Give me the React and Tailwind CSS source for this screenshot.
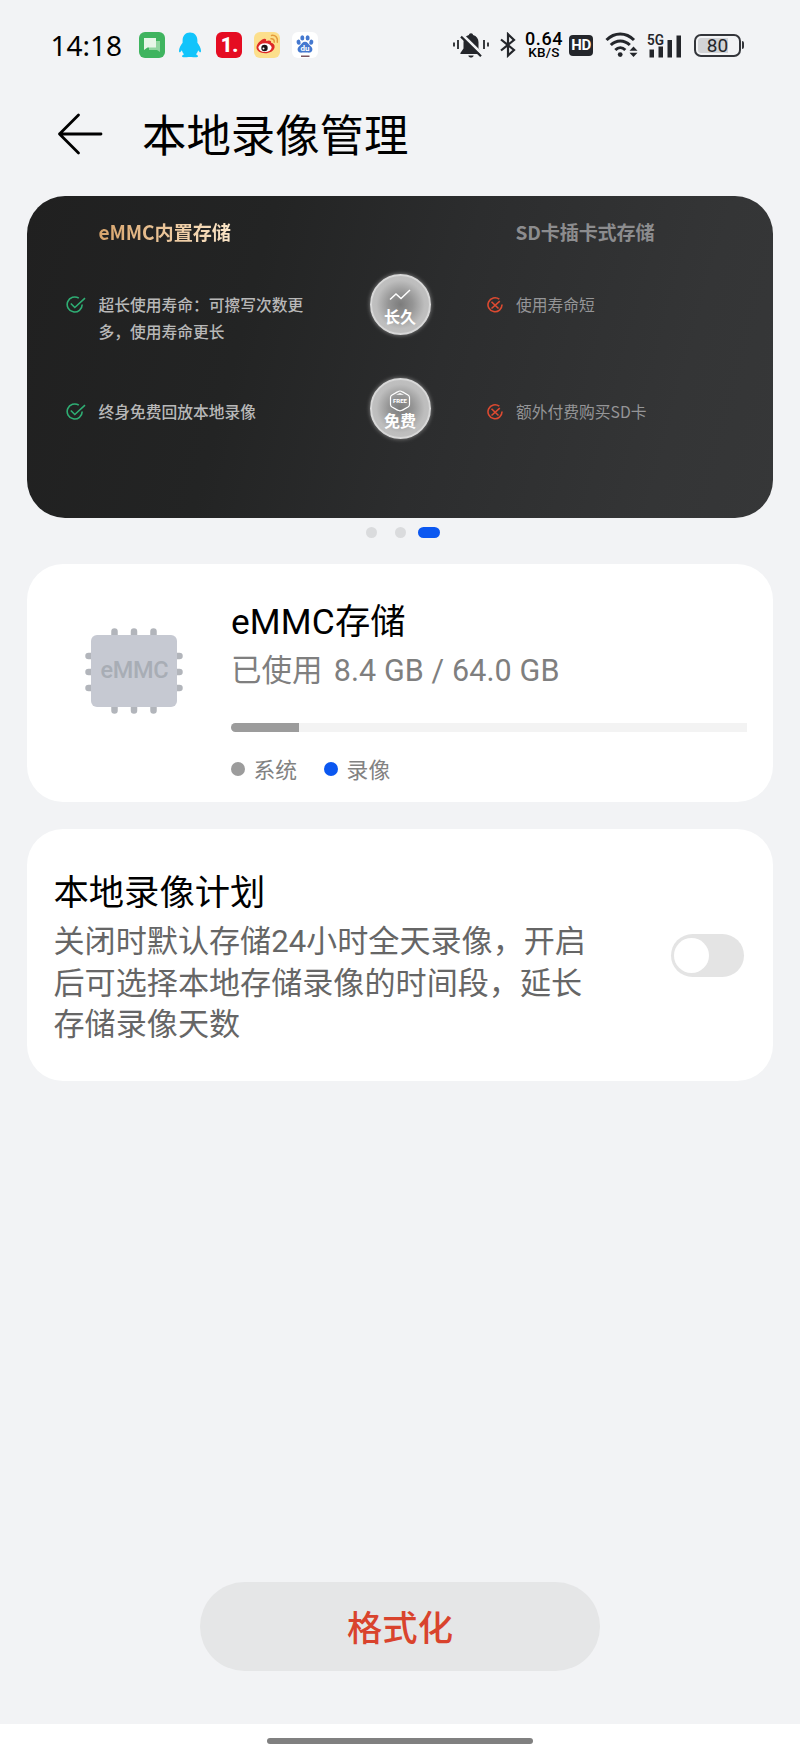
import { useState } from "react";

const GOOD_POINTS = ["超长使用寿命：可擦写次数更多，使用寿命更长", "终身免费回放本地录像"];
const BAD_POINTS = ["使用寿命短", "额外付费购买SD卡"];

const storage = { used: 8.4, total: 64.0 };

function ChatIcon() {
  return (
    <svg viewBox="0 0 26 26" className="h-[26px] w-[26px]">
      <rect width="26" height="26" rx="6" fill="#3fb45f" />
      <path d="M10 9h11v11l-3-2h-8z" fill="#8fd6a0" />
      <path d="M5 6h12v9.500h-8.500L5 18z" fill="#e6f6e8" />
    </svg>
  );
}

function PenguinIcon() {
  return (
    <svg viewBox="0 0 24 26" className="ml-[13px] h-[26px] w-6">
      <path
        d="M12 0.500c-4.600 0-7.400 3.300-7.400 8v2.300C3 13 1 16 1 18.800c0 1.700.8 2 1.600 1l1.300-1.500c.4 1.700 1.100 2.900 2.200 4-1.400.5-2.200 1.300-2 2.400.2.600 5.700.6 7.900.4 2.200.2 7.700.2 7.900-.4.2-1.100-.6-1.900-2-2.400 1.100-1.100 1.800-2.300 2.200-4l1.300 1.500c.8 1 1.600.7 1.600-1 0-2.800-2-5.800-3.600-8V8.500c0-4.700-2.800-8-7.400-8z"
        fill="#12c4fb"
      />
    </svg>
  );
}

function WeiboIcon() {
  return (
    <svg viewBox="0 0 26 26" className="ml-[12px] h-[26px] w-[26px]">
      <rect width="26" height="26" rx="6" fill="#fcdf8c" />
      <path d="M9.500 7c2-.8 3.100.2 2.600 1.900 2.800-1 5.600-.6 5 1.800 2 .5 3.900 1.900 3.500 4.500-.5 3.700-5 6-9.500 6S2.500 19 2.500 15.500C2.500 12.300 6 8.300 9.500 7z" fill="#dd2827" />
      <ellipse cx="11" cy="15.600" rx="6.600" ry="4.400" fill="#fff" />
      <circle cx="10.500" cy="16" r="3.200" fill="#1c1414" />
      <circle cx="9.500" cy="16.600" r="1" fill="#fff" />
      <path d="M17 6.800c2.200-.2 3.600 1.300 3.200 3.400M17.500 3.400c4.200-.5 6.700 2.600 5.800 6.800" fill="none" stroke="#e49b3c" strokeWidth="1.500" strokeLinecap="round" />
    </svg>
  );
}

function BaiduIcon() {
  return (
    <svg viewBox="0 0 26 26" className="ml-[12px] h-[26px] w-[26px]">
      <rect width="26" height="26" rx="6" fill="#fff" />
      <g fill="#4478cf">
        <ellipse cx="6.600" cy="10.200" rx="2" ry="2.600" transform="rotate(-15 6.600 10.200)" />
        <ellipse cx="10.300" cy="5.900" rx="2" ry="2.700" />
        <ellipse cx="15.600" cy="5.900" rx="2" ry="2.700" />
        <ellipse cx="19.300" cy="10.200" rx="2" ry="2.600" transform="rotate(15 19.300 10.200)" />
        <path d="M13 9.800c2.400 0 3.300 2.200 5 3.700 2.100 1.900 2.800 3.100 2.200 5-.7 2-2.700 2.500-4.700 2.100-1.700-.3-3.300-.3-5 0-2 .4-4-.1-4.700-2.100-.6-1.900.1-3.100 2.200-5 1.700-1.500 2.600-3.700 5-3.700z" />
      </g>
      <text x="13" y="19.300" textAnchor="middle" fontSize="8" fontWeight="700" fill="#fff" className="font-['Roboto',sans-serif]">du</text>
      <rect x="9" y="23.500" width="8.500" height="1.500" fill="#7a5560" />
    </svg>
  );
}

function BellOffIcon() {
  return (
    <svg viewBox="0 0 36 26" className="h-[26px] w-9" fill="#24262b">
      <path d="M18 1.200c1.300 0 2 .8 2.100 1.900 3.500.9 5.400 3.700 5.400 7.200v6.200l3.100 4.600v1H7.400v-1l3.100-4.600v-6.200c0-3.500 1.900-6.300 5.400-7.200.1-1.100.8-1.900 2.100-1.900z" />
      <path d="M15.300 23.500h5.400c-.4 1.400-1.400 2-2.700 2s-2.300-.6-2.700-2z" />
      <path d="M9.800 3.300 30.500 23.500" stroke="#f2f3f5" strokeWidth="3" />
      <path d="M8 4.600 28 24.300" stroke="#24262b" strokeWidth="2.200" />
      <path d="M1 10.500v4M5 8v9M31 8v9M35 10.500v4" stroke="#24262b" strokeWidth="1.800" />
    </svg>
  );
}

function BluetoothIcon() {
  return (
    <svg viewBox="0 0 16 26" className="ml-[11px] h-[26px] w-4" fill="none" stroke="#24262b" strokeWidth="2.200">
      <path d="M1 7.500 14 18l-6 5.600V2.200L14 8 1 18.500" />
    </svg>
  );
}

function WifiIcon() {
  return (
    <svg viewBox="0 0 33 26" className="ml-[12px] h-[26px] w-[33px]" fill="none" stroke="#24262b" strokeWidth="3">
      <path d="M1.500 8c8-8 19.500-8 27.500 0M5.800 13c5.500-5.500 13.500-5.500 19 0M10.300 18c3-3 7-3 10 0" />
      <circle cx="15.200" cy="22.600" r="2.400" fill="#24262b" stroke="none" />
      <path d="m28.500 14.500 4 4.300h-8zM28.500 25l4-4.300h-8z" fill="#24262b" stroke="none" />
    </svg>
  );
}

function SignalIcon() {
  return (
    <svg viewBox="0 0 36 26" className="ml-[9px] h-[26px] w-9" fill="#24262b">
      <text x="0" y="12.500" fontSize="15.500" fontWeight="600" textLength="17" lengthAdjust="spacingAndGlyphs" className="font-['Roboto',sans-serif]">5G</text>
      <rect x="2.500" y="17.500" width="4.500" height="8" />
      <rect x="11.500" y="14.500" width="4.500" height="11" />
      <rect x="20.500" y="8" width="4.500" height="17.500" />
      <rect x="29.500" y="3.500" width="4.500" height="22" />
    </svg>
  );
}

function StatusBar() {
  return (
    <div className="flex h-[90px] items-center pr-[56px] pl-[50.500px] text-[#24262b]">
      <span className="w-[88.500px] font-['Noto_Sans','Noto_Sans_CJK_SC',sans-serif] text-[28px] leading-none text-black">14:18</span>
      <ChatIcon />
      <PenguinIcon />
      <span className="ml-[13.5px] flex h-[26px] w-[26px] items-center justify-center rounded-md bg-[#e50c22] pl-0.5 font-['Roboto',sans-serif] text-[20px] leading-none font-black text-white">
        1.
      </span>
      <WeiboIcon />
      <BaiduIcon />

      <div className="ml-auto flex items-center">
        <BellOffIcon />
        <BluetoothIcon />
        <div className="ml-[9px] flex w-[38px] flex-col items-center font-['Roboto',sans-serif] font-medium text-black">
          <span className="text-[18px] leading-[14px] tracking-[0.6px]">0.64</span>
          <span className="text-[13.500px] leading-[12px] tracking-[0.2px]">KB/S</span>
        </div>
        <span className="ml-[6px] flex h-[21px] w-6 items-center justify-center rounded-[4px] bg-[#24262b] font-['Roboto',sans-serif] text-[15px] leading-none font-bold tracking-[-0.5px] text-white">
          HD
        </span>
        <WifiIcon />
        <SignalIcon />
        <div className="ml-[11px] flex h-[23px] w-[47px] items-center justify-center rounded-[7px] border-2 border-[#33353a] bg-linear-to-r from-[#d2d3d6] from-75% to-[#f2f3f5] to-75% bg-clip-content p-0.5 font-['Roboto',sans-serif] text-[19px] leading-none text-[#24262b]">
          80
        </div>
        <span className="ml-px h-2 w-[2px] rounded-r bg-[#33353a]" />
      </div>
    </div>
  );
}

function CheckMark() {
  return (
    <svg viewBox="0 0 20 18" className="h-[18px] w-5 shrink-0" fill="none" stroke="#2fae74" strokeWidth="1.600">
      <path d="M12.800 2.200A7.500 7.500 0 1 0 16.200 8.500" />
      <path d="m4.800 7.500 4 4L19 2.200" />
    </svg>
  );
}

function CrossMark() {
  return (
    <svg viewBox="0 0 16 18" className="h-[18px] w-4 shrink-0" fill="none" stroke="#dc4a31" strokeWidth="1.600">
      <path d="M12.300 3.200A7 7 0 1 0 15 8.500" />
      <path d="m4.500 5.700 7 6.800M4.500 12.500l8.300-7.300" />
    </svg>
  );
}

function Medal({ label, children }) {
  return (
    <div className="flex h-[61px] w-[61px] flex-col items-center justify-end rounded-full border-2 border-[#d8d8d8] bg-[radial-gradient(circle,#7c7c7c_0%,#959595_30%,#bdbdbd_60%,#c6c6c6_100%)] pb-[8px] shadow-[0_0_4px_#8a8a8a]">
      {children}
      <span className="text-[16px] leading-[17px] font-bold text-white">{label}</span>
    </div>
  );
}

function CompareBanner() {
  return (
    <section className="mx-[27px] flex h-[322px] rounded-[38px] bg-linear-[105deg,#202020_0%,#232424_30%,#2c2d2e_55%,#343536_85%,#363738_100%] font-['Noto_Sans_CJK_SC',sans-serif]">
      <div className="w-[342px] pt-[24.500px] pl-[39px]">
        <h2 className="ml-[32.500px] w-fit bg-linear-to-r from-[#d9a56c] to-[#fbe6c8] bg-clip-text text-[19.200px] leading-6 font-bold tracking-[-0.1px] text-transparent">
          eMMC内置存储
        </h2>
        <div className="mt-[47px] flex h-[107px] gap-[12.500px] text-[15.750px] leading-[27px] font-medium text-[#b8b8b8]">
          <span className="pt-[5px]"><CheckMark /></span>
          <p className="w-[206px]">{GOOD_POINTS[0]}</p>
        </div>
        <div className="flex gap-[12.500px] text-[15.750px] leading-[27px] font-medium text-[#b8b8b8]">
          <span className="pt-[5px]"><CheckMark /></span>
          <p>{GOOD_POINTS[1]}</p>
        </div>
      </div>

      <div className="flex w-[62px] flex-col items-center gap-[43px] pt-[78px]">
        <Medal label="长久">
          <svg viewBox="0 0 22 12" className="mb-[7px] h-3 w-[22px]" fill="none" stroke="#fff" strokeWidth="1.500">
            <path d="m1 10.500 6-5.500 5 4.500 9-8.500" />
          </svg>
        </Medal>
        <Medal label="免费">
          <svg viewBox="0 0 22 22" className="h-[22px] w-[22px]" fill="none" stroke="#fff" strokeWidth="1.200">
            <path d="M11 1c1 0 1.700.4 2.500.9l5.500 3c1 .6 1.500 1.300 1.500 2.500v7.200c0 1.200-.5 1.900-1.500 2.500l-5.500 3c-1.700 1-3.300 1-5 0l-5.500-3c-1-.6-1.500-1.300-1.500-2.500V7.400c0-1.200.5-1.900 1.500-2.500l5.500-3C9.300 1.400 10 1 11 1z" />
            <path d="M7 4.800 11 3l4 1.800z" fill="#fff" stroke="none" />
            <text x="11" y="13.300" textAnchor="middle" fontSize="6" fontWeight="800" fill="#fff" stroke="none" className="font-['Roboto',sans-serif]">FREE</text>
          </svg>
        </Medal>
      </div>

      <div className="pt-[24.500px] pl-[56px]">
        <h2 className="ml-[28.500px] text-[19.100px] leading-6 font-bold tracking-[-0.15px] text-[#8c8c8e]">SD卡插卡式存储</h2>
        <div className="mt-[47px] flex h-[107px] gap-[13px] text-[15.750px] leading-[27px] text-[#959597]">
          <span className="pt-[5px]"><CrossMark /></span>
          <p>{BAD_POINTS[0]}</p>
        </div>
        <div className="flex gap-[13px] text-[15.750px] leading-[27px] text-[#959597]">
          <span className="pt-[5px]"><CrossMark /></span>
          <p>{BAD_POINTS[1]}</p>
        </div>
      </div>
    </section>
  );
}

function ChipIcon() {
  return (
    <svg viewBox="0 0 98 86" className="h-[86px] w-[98px]">
      {/* pins */}
      <g stroke="#b2b5bb" strokeWidth="6.500" strokeLinecap="round">
        <path d="M29.500 3.500v79M49 3.500v79M68.500 3.500v79" />
        <path d="M3.500 28h91M3.500 44h91M3.500 60h91" />
      </g>
      <rect x="6" y="7" width="86" height="72" rx="6" fill="#c6c9d2" />
      <text x="49.500" y="50" textAnchor="middle" fontSize="23.500" fontWeight="500" textLength="68" fill="#a8adb5" className="font-['Roboto',sans-serif]">eMMC</text>
    </svg>
  );
}

function StorageCard() {
  return (
    <section className="mx-[27px] mt-[26px] flex h-[238px] rounded-[36px] bg-white pr-[26.500px] pl-[58px]">
      <div className="w-[146px] pt-[64px]">
        <ChipIcon />
      </div>
      <div className="flex-1 pt-[34.500px]">
        <h2 className="text-[35.300px] leading-[46px] tracking-[0.15px] text-black">eMMC存储</h2>
        <p className="mt-[3.500px] text-[30.500px] leading-[46px] text-[#7f7f7f]">
          已使用
          <span className="ml-[3.500px] tracking-[0.1px]">
            {" "}
            {storage.used.toFixed(1)} GB / {storage.total.toFixed(1)} GB
          </span>
        </p>
        <div className="mt-[29px] h-[9px] overflow-hidden rounded-l-full bg-[#f3f3f3]">
          <div className="h-full bg-[#9c9c9c]" style={{ width: `${(storage.used / storage.total) * 100}%` }} />
        </div>
        <div className="mt-[23px] flex h-7 items-center text-[21.800px] leading-7 text-[#828282]">
          <span className="mr-[9px] h-[13.500px] w-[13.500px] rounded-full bg-[#9c9c9c]" />
          <span className="pt-[3px]">系统</span>
          <span className="mr-[9px] ml-[27px] h-[13.500px] w-[13.500px] rounded-full bg-[#0b57f0]" />
          <span className="pt-[3px]">录像</span>
        </div>
      </div>
    </section>
  );
}

function PlanCard() {
  const [enabled, setEnabled] = useState(false);

  return (
    <section className="mx-[27px] mt-[26.500px] flex h-[252.500px] items-center justify-between rounded-[36px] bg-white pr-[29.500px] pl-[26.500px]">
      <div className="w-[540px] pt-[6px]">
        <h2 className="text-[35.300px] leading-[46px] text-black">本地录像计划</h2>
        <p className="mt-[5px] text-[31.100px] leading-[41.300px] text-[#666666]">
          关闭时默认存储24小时全天录像，开启后可选择本地存储录像的时间段，延长存储录像天数
        </p>
      </div>
      <button
        role="switch"
        aria-checked={enabled}
        onClick={() => setEnabled(!enabled)}
        className={`mt-px flex h-[43px] w-[73px] items-center rounded-full px-[3.500px] ${enabled ? "justify-end bg-[#0b57f0]" : "bg-[#e4e4e4]"}`}
      >
        <span className="h-[35px] w-[35px] rounded-full bg-white" />
      </button>
    </section>
  );
}

export default function App() {
  return (
    <div className="flex h-[1760px] w-[800px] flex-col bg-[#f2f3f5] font-['Roboto','Noto_Sans_CJK_SC',sans-serif]">
      <StatusBar />

      <header className="flex h-[105.500px] items-center pb-[18px] pl-[57px]">
        <svg viewBox="0 0 46 42" className="h-[42px] w-[46px]" fill="none" stroke="#000" strokeWidth="2.800" strokeLinecap="round" strokeLinejoin="round">
          <path d="M21.500 2 2.500 21l19 19M2.500 21H44" />
        </svg>
        <h1 className="ml-[39px] pt-[6px] text-[44.400px] leading-none text-black">本地录像管理</h1>
      </header>

      <CompareBanner />
      <div className="mt-[8.500px] flex h-3 items-center pl-[365.500px]">
        <span className="h-[11px] w-[11px] rounded-full bg-[#dadbdd]" />
        <span className="ml-[18px] h-[11px] w-[11px] rounded-full bg-[#dadbdd]" />
        <span className="ml-[12.500px] h-[11px] w-[22px] rounded-full bg-[#0b57f0]" />
      </div>

      <StorageCard />
      <PlanCard />

      <button className="mx-auto mt-auto mb-[53px] h-[89px] w-[400px] rounded-full bg-[#e5e6e7] pt-[5px] text-[35.300px] font-medium text-[#d9432d]">
        格式化
      </button>

      <footer className="flex h-9 justify-center bg-white pt-[14px]">
        <span className="h-[6px] w-[266px] rounded-full bg-[#808080]" />
      </footer>
    </div>
  );
}
